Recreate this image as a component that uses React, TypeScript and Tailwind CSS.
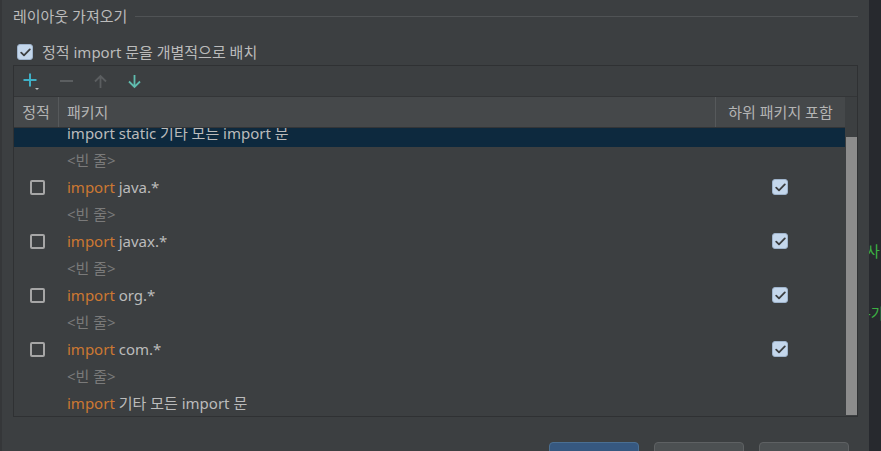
import React from 'react';

type Row =
  | { kind: 'blank' }
  | { kind: 'import'; text: string; checkbox: boolean; withSub: boolean };

const rows: Row[] = [
  { kind: 'blank' },
  { kind: 'import', text: 'java.*', checkbox: true, withSub: true },
  { kind: 'blank' },
  { kind: 'import', text: 'javax.*', checkbox: true, withSub: true },
  { kind: 'blank' },
  { kind: 'import', text: 'org.*', checkbox: true, withSub: true },
  { kind: 'blank' },
  { kind: 'import', text: 'com.*', checkbox: true, withSub: true },
  { kind: 'blank' },
  { kind: 'import', text: '기타 모든 import 문', checkbox: false, withSub: false },
];

const CheckedBox: React.FC = () => (
  <span className="flex h-[16px] w-[16px] items-center justify-center rounded-[3px] border border-[#9fb4cc] bg-[#c4d7ec]">
    <svg width="11" height="9" viewBox="0 0 11 9" fill="none">
      <path d="M1.2 4.6 L4 7.3 L9.8 1.4" stroke="#3c3f41" strokeWidth="1.8" strokeLinecap="round" strokeLinejoin="round" />
    </svg>
  </span>
);

const EmptyBox: React.FC = () => (
  <span className="block h-[15px] w-[15px] rounded-[2px] border-2 border-[#a6a6a6]" />
);

const Toolbar: React.FC = () => (
  <div className="flex h-[31px] items-center gap-[19px] border-b border-[#333537] pl-[9px]">
    <svg width="17" height="19" viewBox="0 0 17 19" fill="none">
      <path d="M7 1.5 V14.5 M0.5 8 H13.5" stroke="#3fb0c6" strokeWidth="2" />
      <path d="M12 16 H16 L14 18 Z" fill="#bbbbbb" />
    </svg>
    <svg width="15" height="14" viewBox="0 0 15 14" fill="none">
      <path d="M1 7 H14" stroke="#5b5e60" strokeWidth="2" />
    </svg>
    <svg width="15" height="15" viewBox="0 0 15 15" fill="none">
      <path d="M7.5 14 V2 M2 7.5 L7.5 2 L13 7.5" stroke="#5b5e60" strokeWidth="1.8" />
    </svg>
    <svg width="15" height="15" viewBox="0 0 15 15" fill="none">
      <path d="M7.5 1 V13 M2 7.5 L7.5 13 L13 7.5" stroke="#5fbcae" strokeWidth="1.8" />
    </svg>
  </div>
);

export default function App() {
  return (
    <div className="flex h-[451px] w-[881px] overflow-hidden bg-[#27292e] font-['Noto_Sans','Noto_Sans_CJK_KR',sans-serif] text-[15px] text-[#bbbbbb]">
      <div className="flex w-[869px] shrink-0 flex-col border-l-2 border-[#353739] bg-[#3c3f41]">
        <div className="pl-[11px] pr-[11px]">
          <div className="flex h-[22px] items-center gap-[8px] mt-[5px]">
            <span className="leading-none text-[#bbbbbb]">레이아웃 가져오기</span>
            <span className="h-px flex-1 bg-[#505355]" />
          </div>
          <div className="mt-[15px] flex h-[20px] items-center gap-[9px] pl-[4px]">
            <CheckedBox />
            <span className="leading-none">정적 import 문을 개별적으로 배치</span>
          </div>
          <div className="mt-[3px] flex h-[352px] w-[845px] flex-col border border-[#2f3133]">
            <Toolbar />
            <div className="flex min-h-0 flex-1">
              <div className="flex w-[831px] flex-col">
                <div className="flex h-[31px] shrink-0 items-center border-b border-[#333537] bg-[#45484a] text-[#b4b4b4]">
                  <div className="flex h-full w-[45px] items-center justify-center border-r border-[#56595b]">정적</div>
                  <div className="flex h-full w-[657px] items-center border-r border-[#56595b] pl-[8px]">패키지</div>
                  <div className="flex h-full flex-1 items-center justify-center">하위 패키지 포함</div>
                </div>
                <div className="min-h-0 flex-1 overflow-hidden">
                  <div className="-mt-[8px] flex h-[27px] items-center bg-[#0d293e] pl-[53px] text-[#bbbbbb]">
                    import static 기타 모든 import 문
                  </div>
                  {rows.map((row, i) =>
                    row.kind === 'blank' ? (
                      <div key={i} className="flex h-[26px] items-center pl-[53px] text-[#7a7a7a]">
                        &lt;빈 줄&gt;
                      </div>
                    ) : (
                      <div key={i} className="flex h-[28px] items-center">
                        <div className="flex w-[45px] items-center justify-center pl-[2px]">
                          {row.checkbox && <EmptyBox />}
                        </div>
                        <div className="w-[657px] pl-[8px]">
                          <span className="text-[#cc7832]">import</span>{' '}
                          <span>{row.text}</span>
                        </div>
                        <div className="flex flex-1 items-center justify-center pr-[1px]">
                          {row.withSub && <CheckedBox />}
                        </div>
                      </div>
                    )
                  )}
                </div>
              </div>
              <div className="flex w-[12px] flex-col pt-[40px] pb-px pl-[1px]">
                <div className="flex-1 bg-[#8c8c8c]" />
              </div>
            </div>
          </div>
        </div>
        <div className="mt-[10px] h-px bg-[#313335]" />
        <div className="flex justify-end gap-[15px] pr-[20px] pt-[15px]">
          <div className="flex h-[30px] w-[90px] items-start justify-center rounded-[4px] border border-[#4a6f93] bg-[#365880] pt-[4px] text-[#dddddd]">
            확인
          </div>
          <div className="flex h-[30px] w-[90px] items-start justify-center rounded-[4px] border border-[#5e6163] bg-[#4c5052] pt-[4px]">
            취소
          </div>
          <div className="flex h-[30px] w-[90px] items-start justify-center rounded-[4px] border border-[#5e6163] bg-[#4c5052] pt-[4px]">
            적용(A)
          </div>
        </div>
      </div>
      <div className="relative flex-1 overflow-hidden text-[#3cb043]">
        <span className="absolute left-[-3px] top-[244px] whitespace-nowrap leading-none">사</span>
        <span className="absolute left-[-3px] top-[306px] whitespace-nowrap leading-none">-가</span>
      </div>
    </div>
  );
}
